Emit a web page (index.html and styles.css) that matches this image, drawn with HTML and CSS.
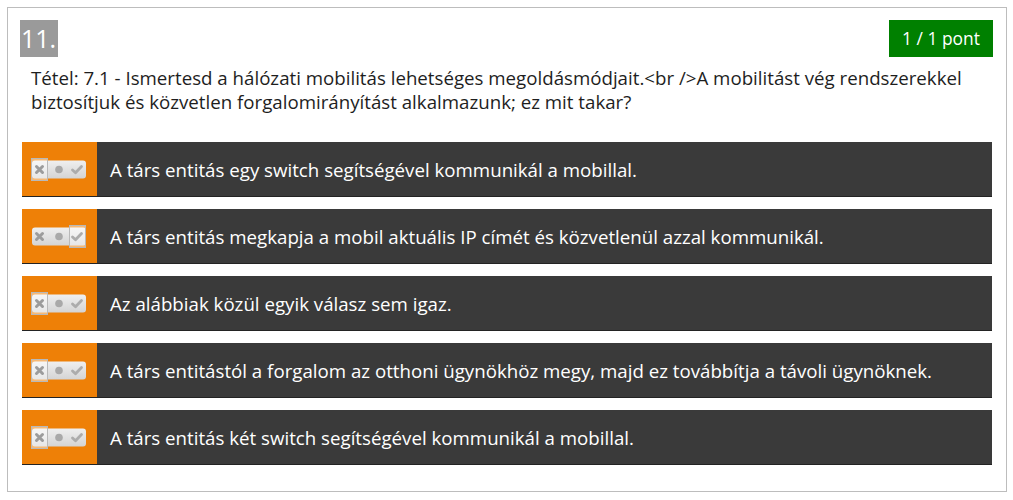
FILE: index.html
```html
<!DOCTYPE html>
<html lang="hu">
<head>
<meta charset="utf-8">
<link rel="stylesheet" href="styles.css">
</head>
<body>
<div class="card">
  <div class="head">
    <div class="num">11.</div>
    <div class="score">1 / 1 pont</div>
  </div>
  <p class="question">Tétel: 7.1 - Ismertesd a hálózati mobilitás lehetséges megoldásmódjait.&lt;br /&gt;A mobilitást vég rendszerekkel biztosítjuk és közvetlen forgalomirányítást alkalmazunk; ez mit takar?</p>
  <div class="answers">
    <div class="answer">
      <div class="mark">
        <svg class="toggle" width="56" height="23" viewBox="0 0 56 23"><use href="#tg"/><rect class="sel" x="0.5" y="0.5" width="16" height="22"/><use href="#glyphs"/></svg>
      </div>
      <div class="text">A társ entitás egy switch segítségével kommunikál a mobillal.</div>
    </div>
    <div class="answer">
      <div class="mark">
        <svg class="toggle" width="56" height="23" viewBox="0 0 56 23"><use href="#tg"/><rect class="sel" x="38.5" y="0.5" width="16" height="22"/><use href="#glyphs"/></svg>
      </div>
      <div class="text">A társ entitás megkapja a mobil aktuális IP címét és közvetlenül azzal kommunikál.</div>
    </div>
    <div class="answer">
      <div class="mark">
        <svg class="toggle" width="56" height="23" viewBox="0 0 56 23"><use href="#tg"/><rect class="sel" x="0.5" y="0.5" width="16" height="22"/><use href="#glyphs"/></svg>
      </div>
      <div class="text">Az alábbiak közül egyik válasz sem igaz.</div>
    </div>
    <div class="answer">
      <div class="mark">
        <svg class="toggle" width="56" height="23" viewBox="0 0 56 23"><use href="#tg"/><rect class="sel" x="0.5" y="0.5" width="16" height="22"/><use href="#glyphs"/></svg>
      </div>
      <div class="text">A társ entitástól a forgalom az otthoni ügynökhöz megy, majd ez továbbítja a távoli ügynöknek.</div>
    </div>
    <div class="answer">
      <div class="mark">
        <svg class="toggle" width="56" height="23" viewBox="0 0 56 23"><use href="#tg"/><rect class="sel" x="0.5" y="0.5" width="16" height="22"/><use href="#glyphs"/></svg>
      </div>
      <div class="text">A társ entitás két switch segítségével kommunikál a mobillal.</div>
    </div>
  </div>
</div>
<svg class="defs" width="0" height="0">
  <defs>
    <linearGradient id="tgGrad" x1="0" y1="0" x2="0" y2="1">
      <stop offset="0" stop-color="#efefef"/>
      <stop offset="1" stop-color="#d4d4d4"/>
    </linearGradient>
    <g id="tg">
      <rect x="1" y="2.5" width="54" height="18" rx="3" fill="url(#tgGrad)"/>
    </g>
    <g id="glyphs">
      <path d="M5.5 8.5 L11.5 14.5 M11.5 8.5 L5.5 14.5" stroke="#9c9c9c" stroke-width="3" stroke-linecap="round"/>
      <circle cx="28" cy="11.5" r="3.8" fill="#a9a9a9"/>
      <path d="M41.5 12 L44.5 14.8 L50.5 8.5" fill="none" stroke="#acacac" stroke-width="2.8" stroke-linecap="round" stroke-linejoin="round"/>
    </g>
  </defs>
</svg>
</body>
</html>
```
FILE: styles.css
```css
html, body {
  margin: 0;
  padding: 0;
  background: #ffffff;
}

body {
  font-family: "Open Sans", "Liberation Sans", sans-serif;
  padding: 7px;
}

.card {
  width: 1000px;
  border: 1px solid #bdbdbd;
  padding: 12px 13px 25px 12px;
  box-sizing: border-box;
  height: 485px;
}

.head {
  display: flex;
  justify-content: space-between;
  align-items: flex-start;
  height: 37px;
}

.num {
  width: 38px;
  height: 37px;
  background: #9a9a9a;
  color: #ffffff;
  font-size: 25px;
  line-height: 37px;
  text-align: center;
  box-sizing: border-box;
  padding-right: 1px;
}

.score {
  width: 104px;
  height: 37px;
  background: #008000;
  color: #ffffff;
  font-size: 17.4px;
  line-height: 37px;
  text-align: center;
}

.question {
  margin: 9px 0 0 11px;
  font-size: 18.7px;
  line-height: 24px;
  color: #1e1e1e;
}

.answers {
  margin: 28px 1px 0 2px;
  display: flex;
  flex-direction: column;
  gap: 12px;
}

.answer {
  display: flex;
  height: 54px;
  background: #3a3a3a;
  border-bottom: 1px solid #232323;
}

.mark {
  width: 75px;
  flex: none;
  background: #ee8007;
  display: flex;
  align-items: center;
  padding-left: 9px;
  box-sizing: border-box;
}

.toggle {
  display: block;
}

.toggle .sel {
  fill: rgba(255, 255, 255, 0.45);
  stroke: #b9b9b9;
  stroke-width: 1;
}

.text {
  display: flex;
  align-items: center;
  padding-left: 13px;
  color: #ffffff;
  font-size: 18.7px;
}

.defs {
  position: absolute;
  width: 0;
  height: 0;
}
```
